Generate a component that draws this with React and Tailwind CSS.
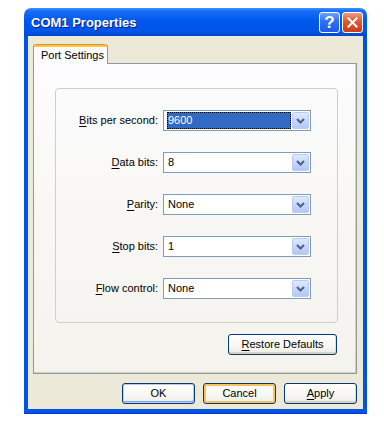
import React from "react";

const rows = [
  { key: "B", rest: "its per second:", value: "9600", selected: true },
  { key: "D", rest: "ata bits:", value: "8" },
  { key: "P", rest: "arity:", value: "None" },
  { key: "S", rest: "top bits:", value: "1" },
  { key: "F", rest: "low control:", value: "None" },
];

function Chevron() {
  return (
    <svg width="9" height="6" viewBox="0 0 9 6">
      <polyline
        points="1,1 4.5,4.5 8,1"
        fill="none"
        stroke="#4d6185"
        strokeWidth="2"
      />
    </svg>
  );
}

function Combo({ value, selected }) {
  return (
    <div className="flex h-[21px] w-[148px] border border-[#7f9db9] bg-white p-px">
      <div className="flex flex-1 items-center pl-[2px] pr-px">
        {selected ? (
          <span className="flex h-[17px] w-full items-center bg-[#316ac5] pl-px text-white outline-1 outline-dotted outline-[#000] -outline-offset-1">
            {value}
          </span>
        ) : (
          <span className="pl-px">{value}</span>
        )}
      </div>
      <div className="flex w-[17px] items-center justify-center rounded-[2px] border border-[#b9cbf5] bg-[linear-gradient(180deg,#dfe8fd_0%,#c7d7fb_50%,#b4c8f6_100%)]">
        <Chevron />
      </div>
    </div>
  );
}

function XpButton({ children, className = "", hot = false, def = false }) {
  let ring = "shadow-[inset_0_-2px_0_#d6d0c5,inset_-1px_0_0_#e3ddd1]";
  if (hot) ring = "shadow-[inset_0_0_0_2px_#f9c35b,inset_0_2px_0_#fff0cf]";
  if (def) ring = "shadow-[inset_0_0_0_1px_#b9cdf3,inset_-1px_-2px_0_#8aa6e6]";
  return (
    <button
      type="button"
      className={`flex h-[21px] items-center justify-center rounded-[3px] border border-[#003c74] bg-[linear-gradient(180deg,#ffffff_0%,#f7f6f1_60%,#ecebe4_100%)] text-[11px] text-black ${ring} ${className}`}
    >
      {children}
    </button>
  );
}

export default function App() {
  return (
    <div className="h-[425px] w-[384px] bg-white pl-[24px] pt-[8px] font-['Liberation_Sans',Arial,sans-serif] text-[11px] text-black">
      <div className="flex h-[405px] w-[343px] flex-col">
        {/* Title bar */}
        <div className="flex h-[28px] items-center rounded-t-[7px] bg-[linear-gradient(180deg,#3d95ff_0%,#1a6ef8_10%,#0058ee_45%,#0055e6_85%,#0047cc_100%)] pl-[7px] pr-[4px] pt-px">
          <span className="flex-1 text-[13px] font-bold text-white [text-shadow:1px_1px_#0a1c8a]">
            COM1 Properties
          </span>
          <div className="flex gap-[2px]">
            <div className="flex h-[21px] w-[21px] items-center justify-center rounded-[3px] border border-white bg-[linear-gradient(180deg,#6fa0fb_0%,#2f6ff0_45%,#1d5de8_100%)] text-[17px] font-bold text-white">
              ?
            </div>
            <div className="flex h-[21px] w-[21px] items-center justify-center rounded-[3px] border border-white bg-[linear-gradient(180deg,#f09a80_0%,#e2582f_45%,#c93d18_100%)]">
              <svg width="11" height="11" viewBox="0 0 11 11">
                <path
                  d="M1.5 1.5 L9.5 9.5 M9.5 1.5 L1.5 9.5"
                  stroke="#fff"
                  strokeWidth="2"
                  strokeLinecap="square"
                />
              </svg>
            </div>
          </div>
        </div>

        {/* Body */}
        <div className="flex flex-1 flex-col border-x-4 border-b-4 border-[#0054e3] bg-[#ece9d8] pl-[5px] pr-[6px] pt-[8px] shadow-[0_1px_0_#0831d9]">
          {/* Tab strip */}
          <div className="relative z-10 -mb-px flex">
            <div className="flex h-[20px] w-[75px] flex-col rounded-t-[3px] border-x border-[#919b9c] bg-[#fcfcfe]">
              <div className="h-[3px] rounded-t-[3px] border-t border-[#e68b2c] bg-[#ffc83c]" />
              <div className="pl-[7px] pt-[1px] leading-[14px]">Port Settings</div>
            </div>
          </div>

          {/* Tab panel */}
          <div className="flex h-[311px] flex-col border border-[#919b9c] bg-[linear-gradient(180deg,#fcfcfe_0%,#f7f6f2_60%,#f4f3ee_100%)] pl-[21px] pr-[18px] pt-[24px] shadow-[inset_-1px_-1px_0_#d4d0c8]">
            <div className="flex h-[235px] flex-col gap-[21px] rounded-[4px] border border-[#d0d0bf] pt-[21px]">
              {rows.map((r) => (
                <div key={r.key} className="flex h-[21px] items-center gap-[5px]">
                  <div className="w-[102px] text-right">
                    <span className="underline underline-offset-2">{r.key}</span>
                    {r.rest}
                  </div>
                  <Combo value={r.value} selected={r.selected} />
                </div>
              ))}
            </div>
            <div className="mr-px mt-[11px] flex justify-end">
              <XpButton className="w-[109px]">
                <span>
                  <span className="underline underline-offset-2">R</span>estore Defaults
                </span>
              </XpButton>
            </div>
          </div>

          {/* Dialog buttons */}
          <div className="mt-[9px] flex justify-end gap-[8px]">
            <XpButton className="w-[73px]" def>
              OK
            </XpButton>
            <XpButton className="w-[73px]" hot>
              Cancel
            </XpButton>
            <XpButton className="w-[73px]">
              <span>
                <span className="underline underline-offset-2">A</span>pply
              </span>
            </XpButton>
          </div>
        </div>
      </div>
    </div>
  );
}
